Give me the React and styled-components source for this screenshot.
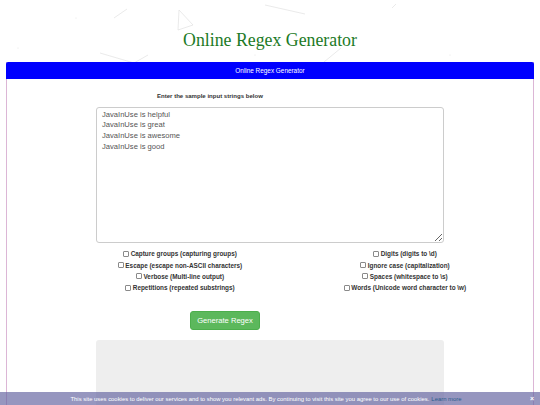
import React from "react";
import styled, { createGlobalStyle } from "styled-components";

const Global = createGlobalStyle`
  html, body { margin: 0; padding: 0; background: #ffffff; overflow: hidden; }
  body { font-family: "Liberation Sans", Arial, sans-serif; }
  * { box-sizing: border-box; }
`;

const Page = styled.div`
  position: relative;
  width: 540px;
  height: 405px;
  overflow: hidden;
`;

const Backdrop = styled.svg`
  position: absolute;
  left: 0;
  top: 0;
  width: 540px;
  height: 70px;
  pointer-events: none;
`;

const TitleBar = styled.header`
  position: relative;
  height: 62px;
  display: flex;
  align-items: flex-end;
  justify-content: center;
  padding-bottom: 12px;
`;

const Title = styled.h1`
  margin: 0;
  font-family: "Liberation Serif", "Times New Roman", serif;
  font-weight: normal;
  font-size: 17.8px;
  line-height: 20px;
  color: #1c7a26;
`;

const Panel = styled.section`
  position: relative;
  margin: 0 6px;
  border-left: 1px solid #dcb6d6;
  border-right: 1px solid #dcb6d6;
  height: 400px;
`;

const PanelHead = styled.div`
  height: 17px;
  margin: 0 -1px;
  background: #0000ff;
  border-radius: 2px 2px 0 0;
  color: #ffffff;
  font-size: 6.4px;
  display: flex;
  align-items: center;
  justify-content: center;
`;

const PanelBody = styled.div`
  padding-top: 13px;
  display: flex;
  flex-direction: column;
`;

const Column = styled.div`
  margin-left: 89px;
  width: 348px;
  display: flex;
  flex-direction: column;
`;

const Label = styled.div`
  padding-left: 61px;
  font-size: 6.05px;
  font-weight: bold;
  line-height: 8px;
  color: #333;
`;

const Input = styled.textarea`
  margin-top: 7px;
  width: 348px;
  height: 136px;
  border: 1px solid #cccccc;
  border-radius: 3px;
  padding: 1.5px 5px;
  font-family: "Liberation Sans", Arial, sans-serif;
  font-size: 7.6px;
  line-height: 10.9px;
  color: #555555;
  background: #fff;
  outline: none;
`;

const Options = styled.div`
  margin-top: 5px;
  margin-left: 73px;
  display: grid;
  grid-template-columns: 200px 200px;
  column-gap: 25px;
  grid-auto-flow: column;
  grid-template-rows: repeat(4, 11.4px);
`;

const Option = styled.label`
  display: flex;
  align-items: center;
  justify-content: center;
  font-size: 6.4px;
  font-weight: bold;
  color: #333;
  white-space: nowrap;
`;

const Box = styled.input`
  appearance: none;
  width: 6px;
  height: 6px;
  margin: 0 1.5px 0 0;
  border: 0.7px solid #8a8a8a;
  border-radius: 1px;
  background: #fff;
`;

const Generate = styled.button`
  margin-top: 17px;
  margin-left: 183px;
  width: 70px;
  height: 19px;
  background: #5cb85c;
  border: 1px solid #4cae4c;
  border-radius: 3px;
  color: #ffffff;
  font-family: "Liberation Sans", Arial, sans-serif;
  font-size: 7.6px;
  padding: 0;
`;

const Output = styled.div`
  margin-top: 10px;
  margin-left: 89px;
  width: 348px;
  height: 120px;
  background: #eeeeee;
  border-radius: 3px;
`;

const Cookie = styled.div`
  position: absolute;
  left: 0;
  right: 0;
  bottom: 0;
  height: 13px;
  background: rgba(100, 100, 160, 0.68);
  color: #ffffff;
  font-size: 5.9px;
  display: flex;
  align-items: center;
  justify-content: center;
  padding-right: 8px;
`;

const Learn = styled.a`
  color: #2b5c8c;
  text-decoration: none;
  margin-left: 2px;
`;

const Close = styled.span`
  position: absolute;
  right: 6px;
  top: 0;
  line-height: 13px;
  font-size: 7px;
  font-weight: bold;
  color: #fff;
`;

const left = [
  "Capture groups (capturing groups)",
  "Escape (escape non-ASCII characters)",
  "Verbose (Multi-line output)",
  "Repetitions (repeated substrings)",
];
const right = [
  "Digits (digits to \\d)",
  "Ignore case (capitalization)",
  "Spaces (whitespace to \\s)",
  "Words (Unicode word character to \\w)",
];

export default function App() {
  return (
    <Page>
      <Global />
      <Backdrop viewBox="0 0 540 70">
        <g stroke="#dcdcdc" strokeWidth="0.6" fill="none">
          <line x1="114" y1="18" x2="127" y2="9" />
          <polyline points="179,10 193,25 178,30 179,10" />
          <line x1="265" y1="5" x2="305" y2="14" />
          <polyline points="100,53 134,63 148,55" />
          <line x1="324" y1="62" x2="341" y2="48" />
          <line x1="392" y1="8" x2="396" y2="4" />
        </g>
        <g fill="#e4e4e4">
          <circle cx="76" cy="18" r="0.6" />
          <circle cx="18" cy="48" r="0.6" />
          <circle cx="450" cy="55" r="0.6" />
          <circle cx="255" cy="55" r="0.6" />
        </g>
      </Backdrop>
      <TitleBar>
        <Title>Online Regex Generator</Title>
      </TitleBar>
      <Panel>
        <PanelHead>Online Regex Generator</PanelHead>
        <PanelBody>
          <Column>
            <Label>Enter the sample input strings below</Label>
            <Input
              defaultValue={"JavaInUse is helpful\nJavaInUse is great\nJavaInUse is awesome\nJavaInUse is good"}
            />
          </Column>
          <Options>
            {left.concat(right).map((t) => (
              <Option key={t}>
                <Box type="checkbox" />
                {t}
              </Option>
            ))}
          </Options>
          <div>
            <Generate>Generate Regex</Generate>
          </div>
          <Output />
        </PanelBody>
      </Panel>
      <Cookie>
        This site uses cookies to deliver our services and to show you relevant ads. By continuing to visit this site you agree to our use of cookies.
        <Learn href="#">Learn more</Learn>
        <Close>×</Close>
      </Cookie>
    </Page>
  );
}
